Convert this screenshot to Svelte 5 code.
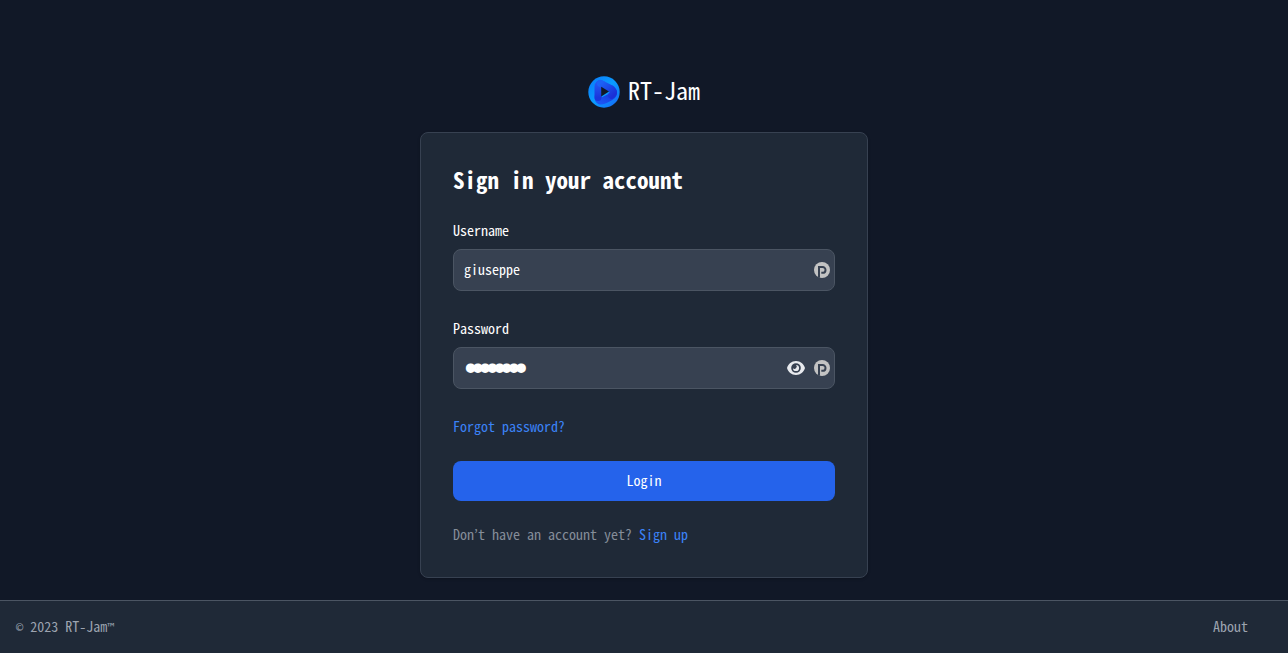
<script>
  let username = $state('giuseppe');
  let password = $state('password');
  let visible = $state(false);
</script>

{#snippet keyBadge()}
  <svg class="badge" viewBox="0 0 16 16" aria-hidden="true">
    <circle cx="8" cy="8" r="8" fill="#c3c3c3" />
    <path fill="none" stroke="#374151" stroke-width="2" d="M5 15.800V5H8.600A2.900 2.900 0 0 1 8.600 10.800H7.300" />
  </svg>
{/snippet}

<div class="page">
  <main>
    <a class="brand" href="#home">
      <svg viewBox="0 0 32 32" aria-hidden="true">
        <defs>
          <linearGradient id="disc" x1="0" y1="0" x2="1" y2="1">
            <stop offset="0" stop-color="#0a78fa" />
            <stop offset="0.5" stop-color="#0a9cff" />
            <stop offset="1" stop-color="#1764f5" />
          </linearGradient>
          <linearGradient id="left" x1="0" y1="0" x2="0" y2="1">
            <stop offset="0" stop-color="#2457f2" />
            <stop offset="1" stop-color="#1a35dc" />
          </linearGradient>
          <linearGradient id="top" x1="0" y1="0" x2="1" y2="1">
            <stop offset="0" stop-color="#1c62f6" />
            <stop offset="1" stop-color="#1b30d6" />
          </linearGradient>
          <linearGradient id="low" x1="1" y1="0" x2="0" y2="1">
            <stop offset="0" stop-color="#1732d8" />
            <stop offset="1" stop-color="#1c55f2" />
          </linearGradient>
        </defs>
        <circle cx="16" cy="16" r="15.700" fill="url(#disc)" />
        <g fill="none" stroke-linecap="round" stroke-linejoin="round" stroke-width="7">
          <path stroke="url(#low)" d="M25.500 16Q26 19 22.500 21L16.500 24Q10 27 10 21" />
          <path stroke="url(#left)" d="M10 21.500V11Q10 6.500 14 8" />
          <path stroke="url(#top)" d="M12.500 7.500L22.500 12.300Q27.500 15.500 23.500 19.300" />
        </g>
        <path fill="#111827" d="M13.200 10.800L21 15.600L13.200 20.400Z" />
      </svg>
      <span>RT-Jam</span>
    </a>

    <section class="card">
      <h1>Sign in your account</h1>
      <form onsubmit={(event) => event.preventDefault()}>
        <div class="field">
          <label for="username">Username</label>
          <div class="control">
            <input id="username" type="text" bind:value={username} />
            <div class="tools">{@render keyBadge()}</div>
          </div>
        </div>
        <div class="field">
          <label for="password">Password</label>
          <div class="control">
            <input id="password" class:masked={!visible} type={visible ? 'text' : 'password'} value={password} oninput={(event) => (password = event.currentTarget.value)} />
            <div class="tools">
              <button class="reveal" type="button" aria-label="Show password" onclick={() => (visible = !visible)}>
                <svg viewBox="0 0 18 14" aria-hidden="true">
                  <path
                    fill="#e8eaee"
                    fill-rule="evenodd"
                    d="M9 0C13.500 0 16.800 3 18 7C16.800 11 13.500 14 9 14S1.200 11 0 7C1.200 3 4.500 0 9 0ZM9 2.200A4.800 4.800 0 1 0 9 11.800A4.800 4.800 0 1 0 9 2.200Z"
                  />
                  <path fill="#e8eaee" d="M9 3.900A3.100 3.100 0 1 1 5.900 7.200A2 2 0 0 0 9 3.900Z" />
                </svg>
              </button>
              {@render keyBadge()}
            </div>
          </div>
        </div>
        <a class="forgot" href="#reset">Forgot password?</a>
        <button class="submit" type="submit">Login</button>
        <p>Don’t have an account yet? <a href="#signup">Sign up</a></p>
      </form>
    </section>
  </main>

  <footer>
    <span><span class="symbol">©</span> 2023 RT-Jam<span class="symbol">™</span></span>
    <a href="#about">About</a>
  </footer>
</div>

<style>
  :global(body) {
    margin: 0;
    background: #111827;
  }

  .page,
  .page * {
    box-sizing: border-box;
  }

  .page {
    display: flex;
    flex-direction: column;
    min-height: 100vh;
    color: #fff;
    font: 14px/18px 'Noto Sans CJK JP', 'DejaVu Sans Mono', monospace;
    font-feature-settings: 'hwid';
  }

  main {
    flex: 1;
    display: flex;
    flex-direction: column;
    align-items: center;
    justify-content: center;
    gap: 24px;
    padding-top: 54px;
  }

  a {
    color: #3b82f6;
    text-decoration: none;
  }

  .brand {
    display: flex;
    align-items: flex-start;
    gap: 8px;
    color: #fff;
    font-size: 24px;
    line-height: 28px;
  }

  .brand svg {
    width: 32px;
    height: 32px;
  }

  .card {
    width: 100%;
    max-width: 448px;
    padding: 32px 32px 34px;
    border: 1px solid #374151;
    border-radius: 8px;
    background: #1f2937;
    box-shadow: 0 1px 3px rgb(0 0 0 / 20%);
  }

  h1 {
    margin: 0 0 28px;
    font-size: 23px;
    font-weight: 700;
    line-height: 28px;
  }

  form {
    display: flex;
    flex-direction: column;
  }

  .field {
    display: flex;
    flex-direction: column;
    gap: 10px;
    margin-bottom: 28px;
  }

  .control {
    position: relative;
    display: flex;
  }

  input {
    width: 100%;
    height: 42px;
    padding: 0 56px 2px 10px;
    border: 1px solid #4b5563;
    border-radius: 8px;
    outline: 0;
    background: #374151;
    color: #fff;
    font: inherit;
    font-feature-settings: inherit;
  }

  .masked {
    padding-top: 2px;
    padding-bottom: 0;
    font: 12px/20px 'DejaVu Sans Mono', monospace;
    text-indent: 3px;
    -webkit-text-stroke: 6px #fff;
  }

  .tools {
    position: absolute;
    inset: 0 5px 0 auto;
    display: flex;
    align-items: center;
    gap: 9px;
  }

  .badge {
    width: 16px;
    height: 16px;
  }

  button {
    border: 0;
    color: #fff;
    font: inherit;
    font-feature-settings: inherit;
    cursor: pointer;
  }

  .reveal {
    display: flex;
    padding: 0;
    background: none;
  }

  .reveal svg {
    width: 18px;
    height: 14px;
  }

  .forgot {
    align-self: flex-start;
  }

  .submit {
    margin: 26px 0 24px;
    padding: 10px 20px 12px;
    border-radius: 8px;
    background: #2563eb;
  }

  p {
    margin: 0;
    color: #858d99;
  }

  footer {
    display: flex;
    justify-content: space-between;
    padding: 16px 40px 18px 16px;
    border-top: 1px solid #4b5563;
    background: #1f2937;
    color: #9ca3af;
  }

  footer a {
    color: inherit;
  }

  .symbol {
    font-family: 'DejaVu Sans Mono', monospace;
    font-size: 12px;
    line-height: 1;
  }
</style>
